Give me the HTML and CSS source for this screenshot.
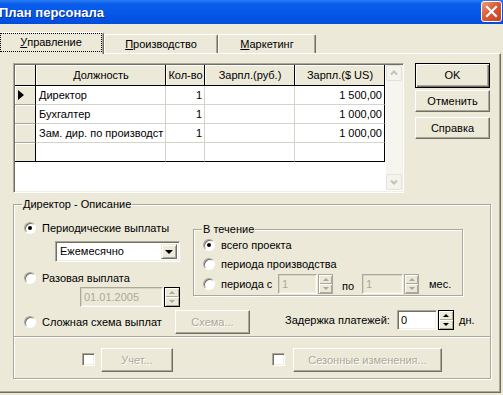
FILE: index.html
```html
<!DOCTYPE html>
<html>

<head>
    <meta charset="utf-8">
    <link rel="stylesheet" href="styles.css">
</head>

<body>
    <div class="dialog">
        <div class="titlebar">
            <span class="title">План персонала</span>
            <span class="close">
                <svg width="19" height="19" viewBox="0 0 19 19">
                    <path d="M5 5 L14 14 M14 5 L5 14" stroke="#fff" stroke-width="2.2" stroke-linecap="square" />
                </svg>
            </span>
        </div>

        <div class="tabs">
            <div class="tab active"><span class="focus"><u>У</u>правление</span></div>
            <div class="tab tab-prod"><u>П</u>роизводство</div>
            <div class="tab tab-mark"><u>М</u>аркетинг</div>
        </div>

        <div class="page">
            <div class="top">
                <div class="grid">
                    <div class="cells">
                        <div class="row head">
                            <div class="ind"></div>
                            <div class="c c-name">Должность</div>
                            <div class="c c-qty">Кол-во</div>
                            <div class="c c-rub">Зарпл.(руб.)</div>
                            <div class="c c-usd">Зарпл.($ US)</div>
                        </div>
                        <div class="row">
                            <div class="ind"><span class="pointer"></span></div>
                            <div class="c c-name">Директор</div>
                            <div class="c c-qty num">1</div>
                            <div class="c c-rub num"></div>
                            <div class="c c-usd num">1 500,00</div>
                        </div>
                        <div class="row">
                            <div class="ind"></div>
                            <div class="c c-name">Бухгалтер</div>
                            <div class="c c-qty num">1</div>
                            <div class="c c-rub num"></div>
                            <div class="c c-usd num">1 000,00</div>
                        </div>
                        <div class="row">
                            <div class="ind"></div>
                            <div class="c c-name">Зам. дир. по производст</div>
                            <div class="c c-qty num">1</div>
                            <div class="c c-rub num"></div>
                            <div class="c c-usd num">1 000,00</div>
                        </div>
                        <div class="row last">
                            <div class="ind"></div>
                            <div class="c c-name"></div>
                            <div class="c c-qty"></div>
                            <div class="c c-rub"></div>
                            <div class="c c-usd"></div>
                        </div>
                    </div>
                    <div class="vscroll">
                        <span class="sbtn">
                            <svg width="14" height="14" viewBox="0 0 14 14"><path d="M4 8.5 L7 5.5 L10 8.5" fill="none" stroke="#C5C2B2" stroke-width="2" /></svg>
                        </span>
                        <span class="sbtn">
                            <svg width="14" height="14" viewBox="0 0 14 14"><path d="M4 5.5 L7 8.5 L10 5.5" fill="none" stroke="#C5C2B2" stroke-width="2" /></svg>
                        </span>
                    </div>
                </div>

                <div class="buttons">
                    <div class="btn default">OK</div>
                    <div class="btn btn-cancel">Отменить</div>
                    <div class="btn btn-help">Справка</div>
                </div>
            </div>

            <div class="group desc">
                <div class="group-title">Директор - Описание</div>
                <div class="desc-top">
                    <div class="desc-left">
                        <div class="radio r-period"><span class="dot on"></span><span>Периодические выплаты</span></div>
                        <div class="combo">
                            <span class="combo-text">Ежемесячно</span>
                            <span class="combo-btn"></span>
                        </div>
                        <div class="radio r-once"><span class="dot"></span><span>Разовая выплата</span></div>
                        <div class="date-row">
                            <div class="edit off date">01.01.2005</div>
                            <div class="spin dark off"><span class="up"></span><span class="down"></span></div>
                        </div>
                    </div>

                    <div class="group during">
                        <div class="group-title">В течение</div>
                        <div class="radio d1"><span class="dot on"></span><span>всего проекта</span></div>
                        <div class="radio d2"><span class="dot"></span><span>периода производства</span></div>
                        <div class="d3">
                            <div class="radio d3-radio"><span class="dot"></span><span>периода с</span></div>
                            <div class="edit off e-from">1</div>
                            <div class="spin off"><span class="up"></span><span class="down"></span></div>
                            <span class="lbl-to">по</span>
                            <div class="edit off e-to">1</div>
                            <div class="spin off"><span class="up"></span><span class="down"></span></div>
                            <span class="lbl-mes">мес.</span>
                        </div>
                    </div>
                </div>

                <div class="desc-bottom">
                    <div class="radio r-complex"><span class="dot"></span><span>Сложная схема выплат</span></div>
                    <div class="btn off btn-scheme">Схема...</div>
                    <div class="delay">
                        <span class="delay-label">Задержка платежей:</span>
                        <div class="edit e-delay">0</div>
                        <div class="spin dark"><span class="up"></span><span class="down"></span></div>
                        <span class="lbl-days">дн.</span>
                    </div>
                </div>
            </div>

            <div class="extras">
                <span class="check c-account"></span>
                <div class="btn off btn-account">Учет...</div>
                <span class="check c-season"></span>
                <div class="btn off btn-season">Сезонные изменения...</div>
            </div>
        </div>
    </div>
</body>

</html>
```

FILE: styles.css
```css
body {
    margin: 0;
    background-color: #ECE9D8;
    font-family: "Liberation Sans", Arial, sans-serif;
    font-size: 11px;
    line-height: 13px;
    color: #000;
}

.dialog {
    width: 503px;
    height: 395px;
    overflow: hidden;
    background-color: #ECE9D8;
}

/* title bar */

.titlebar {
    height: 24px;
    display: flex;
    justify-content: space-between;
    align-items: flex-start;
    background: linear-gradient(#2B7DF6, #0A5EEB 4px, #0558E8 55%, #034CDD);
}

.title {
    margin-left: -1px;
    margin-top: 5px;
    color: #fff;
    font-weight: bold;
    font-size: 13px;
    line-height: 15px;
    text-shadow: 1px 1px #0B2F9E;
}

.close {
    width: 21px;
    height: 21px;
    margin-top: 1px;
    margin-right: 1px;
    box-sizing: border-box;
    border: 1px solid #fff;
    border-radius: 3px;
    background: linear-gradient(135deg, #F09C7C, #DC5A36 45%, #C8401D);
    display: flex;
    align-items: center;
    justify-content: center;
}

/* tabs */

.tabs {
    height: 29px;
    display: flex;
    align-items: flex-end;
}

.tab {
    box-sizing: border-box;
    height: 19px;
    border-top: 1px solid #fff;
    border-left: 1px solid #fff;
    border-right: 1px solid #716F64;
    border-radius: 2px 2px 0 0;
    box-shadow: inset -1px 0 #ACA899;
    display: flex;
    align-items: center;
    justify-content: center;
}

.tab.active {
    position: relative;
    z-index: 1;
    width: 106px;
    height: 22px;
    margin-left: -2px;
    margin-bottom: -1px;
    padding: 0 1px 2px 1px;
    background-color: #ECE9D8;
    align-items: stretch;
}

.focus {
    flex: 1;
    border: 1px dotted #000;
    display: flex;
    align-items: center;
    justify-content: center;
}

.tab-prod {
    width: 114px;
}

.tab-mark {
    width: 98px;
}

/* tab page */

.page {
    box-sizing: border-box;
    width: 502px;
    height: 340px;
    margin-left: -1px;
    border-top: 1px solid #fff;
    border-left: 1px solid #fff;
    border-right: 1px solid #716F64;
    border-bottom: 1px solid #716F64;
    box-shadow: inset -1px -1px #ACA899;
}

.top {
    display: flex;
    padding-top: 9px;
}

/* grid */

.grid {
    box-sizing: border-box;
    width: 391px;
    height: 130px;
    margin-left: 13px;
    padding: 1px;
    border: 1px solid;
    border-color: #ACA899 #fff #fff #ACA899;
    box-shadow: inset 1px 1px #716F64, inset -1px -1px #F1EFE2;
    background-color: #fff;
    display: flex;
}

.cells {
    width: 370px;
}

.row {
    display: flex;
    height: 19px;
}

.row.head {
    height: 21px;
}

.row > div {
    box-sizing: border-box;
    border-right: 1px solid #D6D3C8;
    border-bottom: 1px solid #D6D3C8;
    white-space: nowrap;
    overflow: hidden;
    display: flex;
    align-items: center;
}

.row > .ind {
    width: 21px;
    background-color: #ECE9D8;
    border-right-color: #000;
    border-bottom-color: #ACA899;
    box-shadow: inset 1px 1px #fff;
}

.row.head > div {
    background-color: #ECE9D8;
    border-right-color: #000;
    border-bottom-color: #000;
    justify-content: center;
    box-shadow: inset 1px 1px #fff;
}

.row > .c-usd {
    border-right-color: #000;
}

.row.last > div {
    border-bottom-color: #000;
}

.c {
    padding: 0 2px 0 3px;
}

.c-name {
    width: 130px;
}

.c-qty {
    width: 39px;
}

.c-rub {
    width: 90px;
}

.c-usd {
    width: 90px;
}

.num {
    justify-content: flex-end;
}

.pointer {
    margin-left: 3px;
    border-left: 6px solid #000;
    border-top: 5px solid transparent;
    border-bottom: 5px solid transparent;
}

.vscroll {
    width: 16px;
    margin-left: 1px;
    margin-bottom: 1px;
    background-color: #F6F5EF;
    display: flex;
    flex-direction: column;
    justify-content: space-between;
}

.sbtn {
    box-sizing: border-box;
    height: 16px;
    border: 1px solid #E4E2D8;
    border-radius: 2px;
    background-color: #F4F3EE;
    display: flex;
    align-items: center;
    justify-content: center;
}

/* buttons */

.buttons {
    margin-left: 11px;
    display: flex;
    flex-direction: column;
}

.btn {
    box-sizing: border-box;
    width: 75px;
    height: 23px;
    border: 1px solid;
    border-color: #fff #716F64 #716F64 #fff;
    box-shadow: inset -1px -1px #ACA899;
    background-color: #ECE9D8;
    display: flex;
    align-items: center;
    justify-content: center;
}

.btn.default {
    height: 25px;
    border-color: #000;
    box-shadow: inset 1px 1px #fff, inset -1px -1px #716F64, inset -2px -2px #ACA899;
}

.btn-cancel {
    margin-top: 2px;
    height: 22px;
}

.btn-help {
    margin-top: 5px;
    height: 22px;
}

.btn.off {
    color: #ACA899;
    text-shadow: 1px 1px #fff;
}

/* group boxes */

.group {
    box-sizing: border-box;
    border: 1px solid #ACA899;
    box-shadow: inset 1px 1px #fff, 1px 1px #fff;
}

.group-title {
    display: table;
    margin: -7px 0 0 8px;
    padding: 0 1px;
    background-color: #ECE9D8;
}

.desc {
    width: 478px;
    height: 133px;
    margin: 11px 0 0 13px;
}

.desc-top {
    display: flex;
}

.desc-left {
    width: 179px;
    padding-left: 10px;
    box-sizing: border-box;
}

.radio {
    height: 14px;
    display: flex;
    align-items: center;
    white-space: nowrap;
}

.dot {
    box-sizing: border-box;
    width: 12px;
    height: 12px;
    margin-right: 6px;
    flex-shrink: 0;
    border-radius: 50%;
    border: 1px solid;
    border-color: #ACA899 #fff #fff #ACA899;
    box-shadow: inset 1px 1px #716F64;
    background-color: #fff;
    display: flex;
    align-items: center;
    justify-content: center;
}

.dot.on::after {
    content: "";
    width: 4px;
    height: 4px;
    border-radius: 50%;
    background-color: #000;
}

.r-period {
    margin-top: 10px;
}

.combo {
    box-sizing: border-box;
    width: 125px;
    height: 21px;
    margin: 6px 0 0 31px;
    padding: 2px;
    border: 1px solid;
    border-color: #ACA899 #fff #fff #ACA899;
    box-shadow: inset 1px 1px #716F64, inset -1px -1px #F1EFE2;
    background-color: #fff;
    display: flex;
}

.combo-text {
    flex: 1;
    padding-left: 2px;
    display: flex;
    align-items: center;
}

.combo-btn {
    box-sizing: border-box;
    width: 16px;
    border: 1px solid;
    border-color: #ECE9D8 #716F64 #716F64 #ECE9D8;
    box-shadow: inset 1px 1px #fff, inset -1px -1px #ACA899;
    background-color: #ECE9D8;
    display: flex;
    align-items: center;
    justify-content: center;
}

.combo-btn::after {
    content: "";
    border-top: 4px solid #000;
    border-left: 4px solid transparent;
    border-right: 4px solid transparent;
    margin-top: 1px;
}

.r-once {
    margin-top: 9px;
}

.date-row {
    display: flex;
    margin: 2px 0 0 56px;
}

.edit {
    box-sizing: border-box;
    height: 20px;
    padding: 0 3px;
    border: 1px solid;
    border-color: #ACA899 #fff #fff #ACA899;
    box-shadow: inset 1px 1px #716F64, inset -1px -1px #F1EFE2;
    background-color: #fff;
    display: flex;
    align-items: center;
}

.edit.off {
    background-color: #ECE9D8;
    color: #ACA899;
    box-shadow: inset 1px 1px #D8D5C7, inset -1px -1px #F1EFE2;
}

.date {
    width: 83px;
}

.spin {
    box-sizing: border-box;
    width: 15px;
    height: 20px;
    margin-left: 1px;
    border: 1px solid #ACA899;
    display: flex;
    flex-direction: column;
}

.spin.dark {
    width: 16px;
    border-color: #000;
}

.spin span {
    flex: 1;
    background-color: #ECE9D8;
    box-shadow: inset 1px 1px #fff, inset -1px -1px #ACA899;
    display: flex;
    align-items: center;
    justify-content: center;
}

.spin .up::after {
    content: "";
    border-bottom: 3px solid #000;
    border-left: 3px solid transparent;
    border-right: 3px solid transparent;
}

.spin .down::after {
    content: "";
    border-top: 3px solid #000;
    border-left: 3px solid transparent;
    border-right: 3px solid transparent;
}

.spin.off .up::after {
    border-bottom-color: #ACA899;
}

.spin.off .down::after {
    border-top-color: #ACA899;
}

/* "В течение" box */

.during {
    width: 270px;
    height: 67px;
    margin-top: 18px;
    padding-left: 9px;
}

.during .group-title {
    margin-left: -1px;
}

.d1 {
    margin-top: 2px;
}

.d2 {
    margin-top: 5px;
}

.d3 {
    height: 20px;
    margin-top: 3px;
    display: flex;
    align-items: center;
}

.d3-radio {
    width: 75px;
}

.e-from {
    width: 39px;
}

.lbl-to {
    margin: 4px 0 0 9px;
    width: 20px;
}

.e-to {
    width: 41px;
}

.lbl-mes {
    margin-left: 10px;
}

/* bottom row of the description */

.desc-bottom {
    height: 24px;
    margin-top: 3px;
    padding-left: 10px;
    display: flex;
    align-items: center;
}

.r-complex {
    width: 151px;
}

.btn-scheme {
    height: 24px;
}

.delay {
    height: 20px;
    margin: -4px 0 0 35px;
    display: flex;
    align-items: center;
}

.delay-label {
    width: 112px;
    white-space: nowrap;
}

.e-delay {
    width: 40px;
}

.lbl-days {
    margin-left: 5px;
}

/* checkbox panel */

.extras {
    box-sizing: border-box;
    width: 478px;
    height: 42px;
    margin-left: 13px;
    padding: 11px 0 0 68px;
    border: 1px solid #ACA899;
    border-top: none;
    box-shadow: inset 1px 0 #fff, 1px 1px #fff;
    display: flex;
    align-items: flex-start;
}

.check {
    box-sizing: border-box;
    width: 13px;
    height: 13px;
    margin-top: 5px;
    border: 1px solid;
    border-color: #ACA899 #fff #fff #ACA899;
    box-shadow: inset 1px 1px #716F64, inset -1px -1px #F1EFE2;
    background-color: #fff;
}

.btn-account {
    width: 72px;
    height: 24px;
    margin-left: 6px;
}

.c-season {
    margin-left: 99px;
}

.btn-season {
    width: 149px;
    height: 24px;
    margin-left: 8px;
}
```
